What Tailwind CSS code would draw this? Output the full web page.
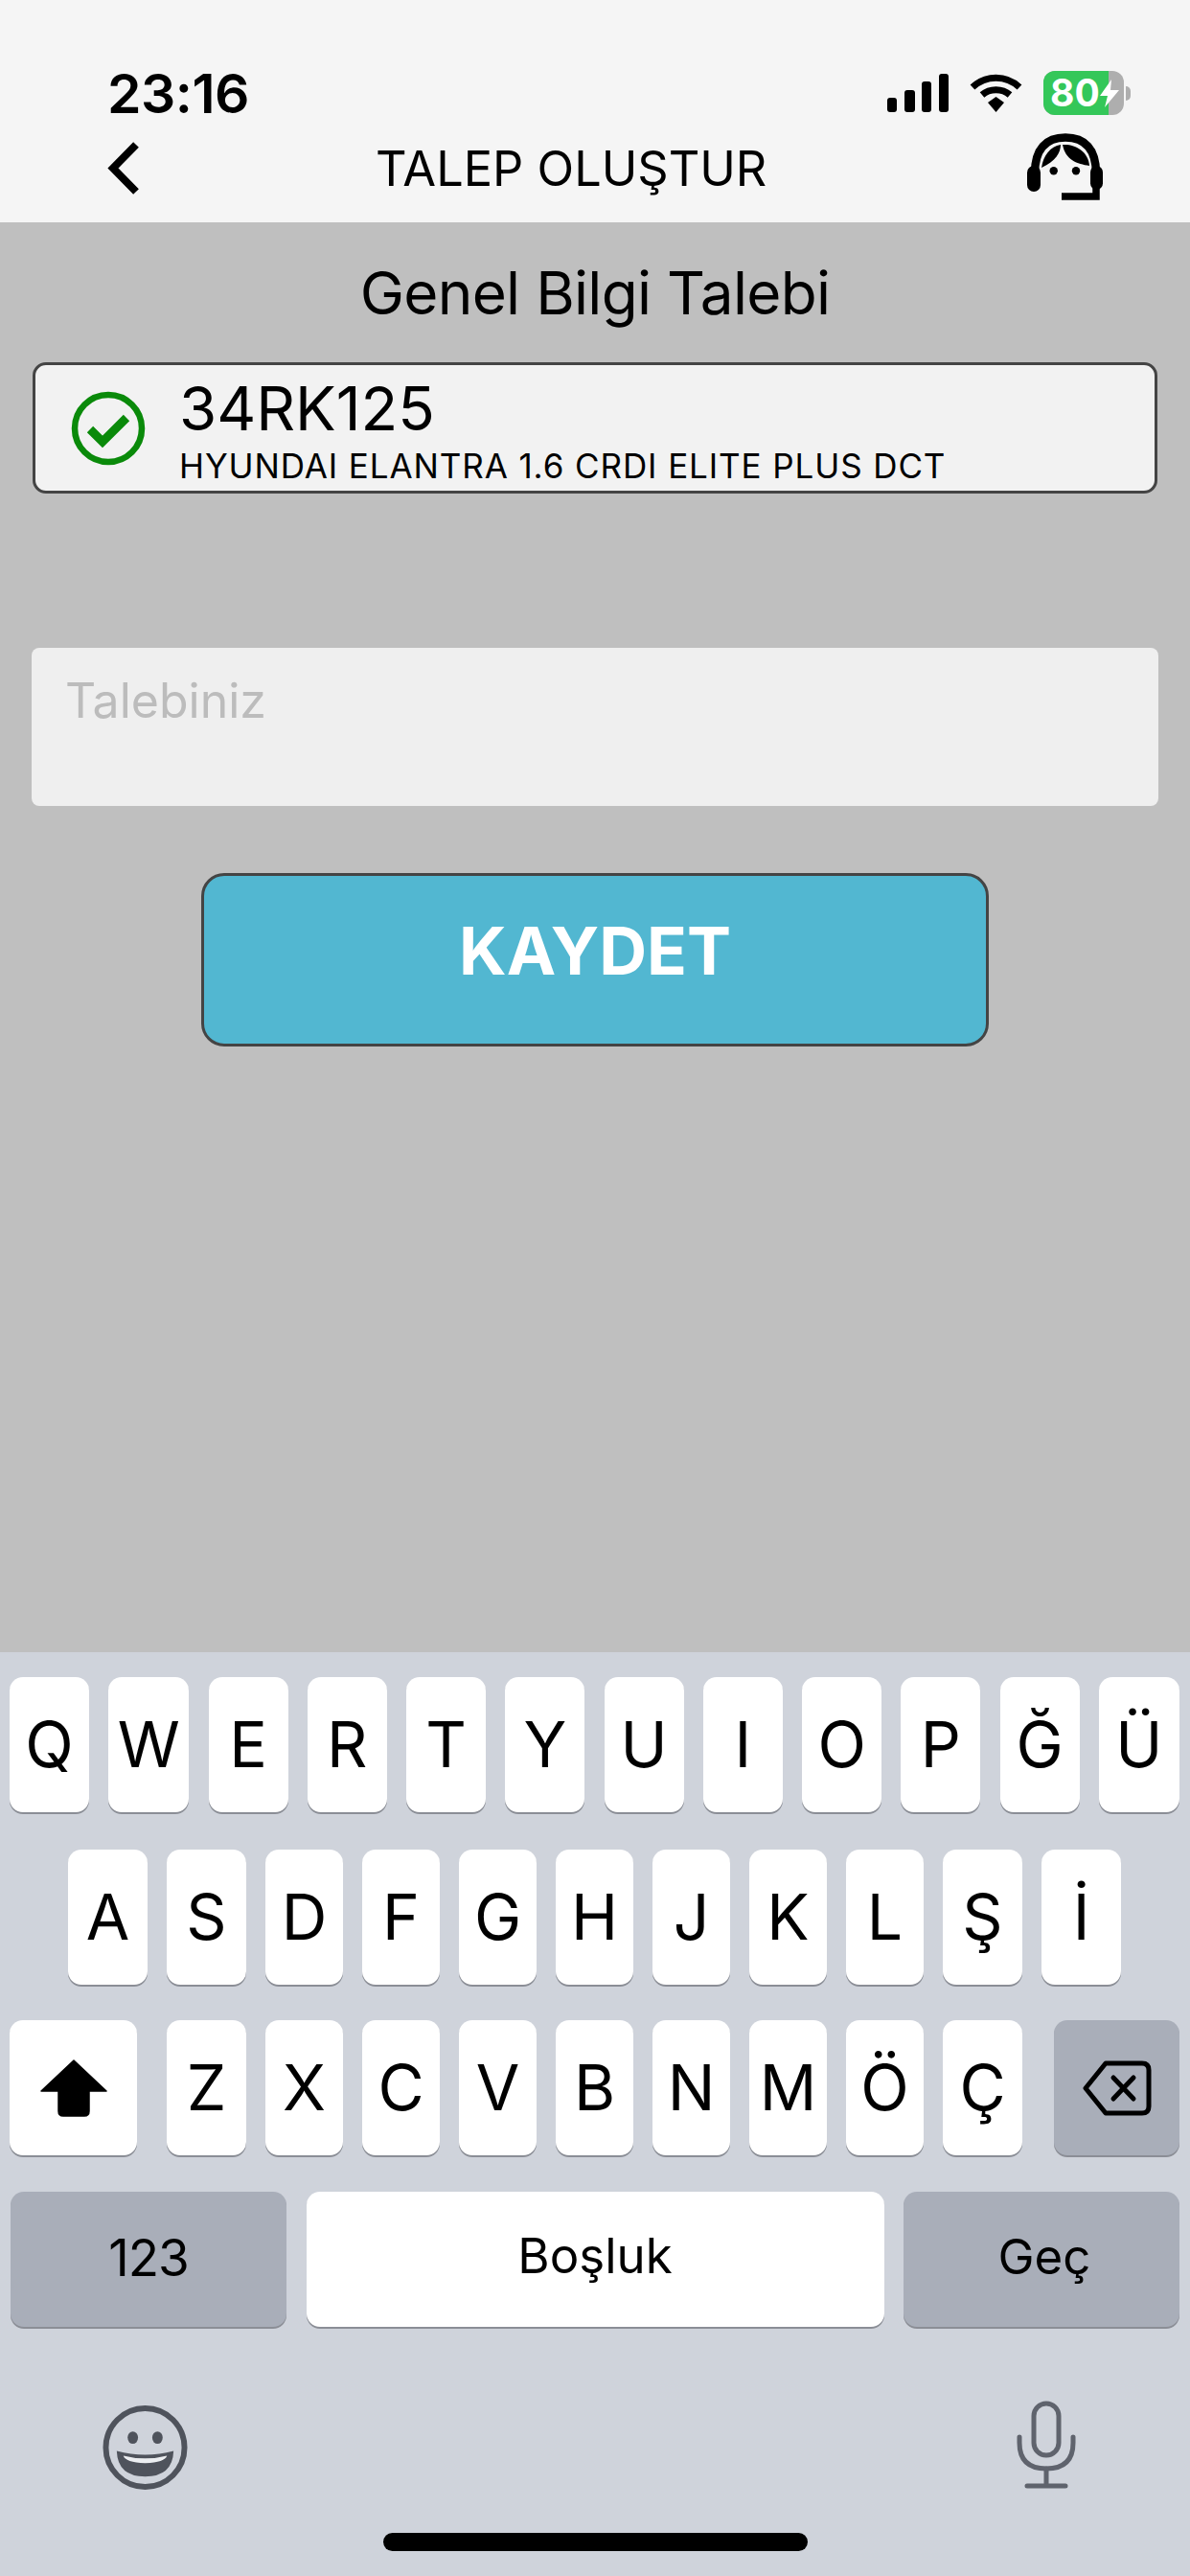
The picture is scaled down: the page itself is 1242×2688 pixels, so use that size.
<!DOCTYPE html>
<html lang="tr">
<head>
<meta charset="utf-8">
<script src="https://cdn.jsdelivr.net/npm/@tailwindcss/browser@4"></script>
</head>
<body class="m-0">
<div class="w-[1242px] h-[2688px] flex flex-col overflow-hidden bg-[#bfbfbf] text-black font-['Inter',sans-serif]">
  <!-- header -->
  <header class="h-[232px] shrink-0 bg-[#f5f5f5] pl-[112px] pr-[62px] flex flex-col">
    <div class="h-[140px] flex items-start justify-between pt-[66px]">
      <span class="text-[57px] font-semibold leading-[64px] tracking-[-0.5px]">23:16</span>
      <div class="flex items-start gap-[22px] pt-[11px]">
        <svg width="64" height="40" viewBox="0 0 64 40" fill="#000"><rect x="0" y="25" width="10" height="15" rx="3"/><rect x="18" y="17" width="11" height="23" rx="3"/><rect x="36" y="8" width="10" height="32" rx="3"/><rect x="54" y="0" width="10" height="40" rx="3"/></svg>
        <svg width="55" height="40" viewBox="0 0 55 40" fill="none" stroke="#000"><path d="M3 14 C17 1 38 1 52 14" stroke-width="7"/><path d="M13 22 C21 15 34 15 42 22" stroke-width="7"/><path d="M19 30 L27.5 24 L36 30 L27.5 40 Z" fill="#000" stroke="none"/></svg>
        <div class="relative flex items-center -mt-[3px]">
          <div class="relative w-[84px] h-[46px] rounded-[12px] overflow-hidden bg-[#aeaeae] flex">
            <div class="w-[68px] bg-[#34c759]"></div>
            <span class="absolute left-[7px] top-0 leading-[46px] text-[39px] font-bold text-white">80</span>
            <svg class="absolute left-[59px] top-[9px]" width="20" height="29" viewBox="0 0 20 29" fill="#fff"><path d="M12 0 L0 17 H8 L5 29 L20 11 H11 Z"/></svg>
          </div>
          <div class="w-[5px] h-[15px] ml-[2px] rounded-r-full bg-[#aeaeae]"></div>
        </div>
      </div>
    </div>
    <div class="flex-1 relative flex items-start justify-between">
      <svg class="mt-[8px]" width="34" height="55" viewBox="0 0 34 55" fill="none" stroke="#000" stroke-width="8"><path d="M30 3 L6 27.5 L30 52"/></svg>
      <span class="absolute left-[280px] top-[8px] text-[50.5px] leading-[56px] whitespace-nowrap">TALEP OLUŞTUR</span>
      <svg class="mr-[28px] -mt-[1px]" width="80" height="72" viewBox="0 0 80 72" fill="none"><path d="M8 42 C8 16 20 4.5 40 4.5 C60 4.5 72 16 72 42" stroke="#000" stroke-width="8.5"/><rect x="0" y="34" width="14" height="27" rx="7" fill="#000"/><rect x="66" y="34" width="13" height="25" rx="6.5" fill="#000"/><path d="M15 36 C17 23 24 14 35 12 C35 20 30 29 15 36 Z" fill="#000"/><path d="M37 12 C50 11 64 19 65 34 C52 32 40 28 37 12 Z" fill="#000"/><circle cx="27.7" cy="39.3" r="4.2" fill="#000"/><circle cx="51" cy="39.3" r="4.2" fill="#000"/><path d="M72 50 V66 H36" stroke="#000" stroke-width="7.5"/></svg>
    </div>
  </header>

  <!-- content -->
  <main class="flex-1 flex flex-col items-stretch px-[33px]">
    <h1 class="text-[62px] leading-[76px] font-normal tracking-[-0.7px] text-center mt-[36px]">Genel Bilgi Talebi</h1>
    <div class="mt-[34px] mx-[1px] h-[137px] rounded-[14px] border-[3px] border-[#444] bg-[#f2f2f2] flex items-center pl-[37px]">
      <svg width="78" height="78" viewBox="0 0 78 78" fill="none" stroke="#0a8a0a"><circle cx="39" cy="39" r="35" stroke-width="6.5"/><path d="M20 40 L33 53 L58 28" stroke-width="9"/></svg>
      <div class="ml-[35px] pt-[6px] flex flex-col">
        <span class="text-[63.5px] leading-[62px]">34RK125</span>
        <span class="mt-[10px] text-[35px] leading-[38px] tracking-[0.9px] whitespace-nowrap">HYUNDAI ELANTRA 1.6 CRDI ELITE PLUS DCT</span>
      </div>
    </div>
    <div class="mt-[161px] h-[165px] rounded-[8px] bg-[#efefef] pl-[35px] pt-[25px] text-[50px] leading-[60px] text-[#bcbcbc]">Talebiniz</div>
    <button class="mt-[70px] self-center w-[822px] h-[181px] rounded-[24px] border-[3px] border-[#444] bg-[#52b7d1] text-white text-[69px] font-bold pb-[18px]">KAYDET</button>
  </main>

  <!-- keyboard -->
  <section class="h-[964px] shrink-0 bg-[#cfd3db] pt-[26px] text-[66px]">
    <div class="flex flex-col gap-[39px]">
      <div class="flex justify-between px-[10px] pr-[11px]">
        <div class="w-[83px] h-[141px] flex items-center justify-center rounded-[14px] bg-white shadow-[0_2px_0_#8b8e96]">Q</div>
        <div class="w-[84px] h-[141px] flex items-center justify-center rounded-[14px] bg-white shadow-[0_2px_0_#8b8e96]">W</div>
        <div class="w-[83px] h-[141px] flex items-center justify-center rounded-[14px] bg-white shadow-[0_2px_0_#8b8e96]">E</div>
        <div class="w-[83px] h-[141px] flex items-center justify-center rounded-[14px] bg-white shadow-[0_2px_0_#8b8e96]">R</div>
        <div class="w-[83px] h-[141px] flex items-center justify-center rounded-[14px] bg-white shadow-[0_2px_0_#8b8e96]">T</div>
        <div class="w-[83px] h-[141px] flex items-center justify-center rounded-[14px] bg-white shadow-[0_2px_0_#8b8e96]">Y</div>
        <div class="w-[83px] h-[141px] flex items-center justify-center rounded-[14px] bg-white shadow-[0_2px_0_#8b8e96]">U</div>
        <div class="w-[83px] h-[141px] flex items-center justify-center rounded-[14px] bg-white shadow-[0_2px_0_#8b8e96]">I</div>
        <div class="w-[83px] h-[141px] flex items-center justify-center rounded-[14px] bg-white shadow-[0_2px_0_#8b8e96]">O</div>
        <div class="w-[83px] h-[141px] flex items-center justify-center rounded-[14px] bg-white shadow-[0_2px_0_#8b8e96]">P</div>
        <div class="w-[83px] h-[141px] flex items-center justify-center rounded-[14px] bg-white shadow-[0_2px_0_#8b8e96]">Ğ</div>
        <div class="w-[84px] h-[141px] flex items-center justify-center rounded-[14px] bg-white shadow-[0_2px_0_#8b8e96]">Ü</div>
      </div>
      <div class="flex justify-between pl-[71px] pr-[72px]">
        <div class="w-[83px] h-[141px] flex items-center justify-center rounded-[14px] bg-white shadow-[0_2px_0_#8b8e96]">A</div>
        <div class="w-[83px] h-[141px] flex items-center justify-center rounded-[14px] bg-white shadow-[0_2px_0_#8b8e96]">S</div>
        <div class="w-[81px] h-[141px] flex items-center justify-center rounded-[14px] bg-white shadow-[0_2px_0_#8b8e96]">D</div>
        <div class="w-[81px] h-[141px] flex items-center justify-center rounded-[14px] bg-white shadow-[0_2px_0_#8b8e96]">F</div>
        <div class="w-[81px] h-[141px] flex items-center justify-center rounded-[14px] bg-white shadow-[0_2px_0_#8b8e96]">G</div>
        <div class="w-[81px] h-[141px] flex items-center justify-center rounded-[14px] bg-white shadow-[0_2px_0_#8b8e96]">H</div>
        <div class="w-[81px] h-[141px] flex items-center justify-center rounded-[14px] bg-white shadow-[0_2px_0_#8b8e96]">J</div>
        <div class="w-[81px] h-[141px] flex items-center justify-center rounded-[14px] bg-white shadow-[0_2px_0_#8b8e96]">K</div>
        <div class="w-[81px] h-[141px] flex items-center justify-center rounded-[14px] bg-white shadow-[0_2px_0_#8b8e96]">L</div>
        <div class="w-[83px] h-[141px] flex items-center justify-center rounded-[14px] bg-white shadow-[0_2px_0_#8b8e96]">Ş</div>
        <div class="w-[83px] h-[141px] flex items-center justify-center rounded-[14px] bg-white shadow-[0_2px_0_#8b8e96]">İ</div>
      </div>
      <div class="flex gap-[20px] pl-[10px] -mt-[2px]">
        <div class="w-[133px] h-[141px] flex items-center justify-center rounded-[14px] bg-white shadow-[0_2px_0_#8b8e96]">
          <svg width="70" height="60" viewBox="0 0 70 60" fill="#000"><path d="M35 1 L69 33 H51 V54 Q51 59 46 59 H24 Q19 59 19 54 V33 H1 Z" stroke="#000" stroke-width="1.5" stroke-linejoin="round"/></svg>
        </div>
        <div class="ml-[11px] w-[83px] h-[141px] flex items-center justify-center rounded-[14px] bg-white shadow-[0_2px_0_#8b8e96]">Z</div>
        <div class="w-[81px] h-[141px] flex items-center justify-center rounded-[14px] bg-white shadow-[0_2px_0_#8b8e96]">X</div>
        <div class="w-[81px] h-[141px] flex items-center justify-center rounded-[14px] bg-white shadow-[0_2px_0_#8b8e96]">C</div>
        <div class="w-[81px] h-[141px] flex items-center justify-center rounded-[14px] bg-white shadow-[0_2px_0_#8b8e96]">V</div>
        <div class="w-[81px] h-[141px] flex items-center justify-center rounded-[14px] bg-white shadow-[0_2px_0_#8b8e96]">B</div>
        <div class="w-[81px] h-[141px] flex items-center justify-center rounded-[14px] bg-white shadow-[0_2px_0_#8b8e96]">N</div>
        <div class="w-[81px] h-[141px] flex items-center justify-center rounded-[14px] bg-white shadow-[0_2px_0_#8b8e96]">M</div>
        <div class="w-[81px] h-[141px] flex items-center justify-center rounded-[14px] bg-white shadow-[0_2px_0_#8b8e96]">Ö</div>
        <div class="w-[83px] h-[141px] flex items-center justify-center rounded-[14px] bg-white shadow-[0_2px_0_#8b8e96]">Ç</div>
        <div class="ml-[13px] w-[131px] h-[141px] flex items-center justify-center rounded-[14px] bg-[#a9aeb9] shadow-[0_2px_0_#8b8e96]">
          <svg width="72" height="58" viewBox="0 0 72 58" fill="none" stroke="#000" stroke-width="5" stroke-linejoin="round"><path d="M24 3 H62 Q69 3 69 10 V48 Q69 55 62 55 H24 L3 29 Z"/><path d="M32 18 L53 40 M53 18 L32 40" stroke-linecap="round"/></svg>
        </div>
      </div>
      <div class="flex justify-between px-[11px] text-[51px] -mt-[1px]">
        <div class="w-[288px] h-[141px] flex items-center justify-center rounded-[14px] bg-[#a9aeb9] shadow-[0_2px_0_#8b8e96] text-[53px] tracking-[-1px] pb-[1px]">123</div>
        <div class="w-[603px] h-[141px] flex items-center justify-center rounded-[14px] bg-white shadow-[0_2px_0_#8b8e96] pb-[6px]">Boşluk</div>
        <div class="w-[288px] h-[141px] flex items-center justify-center rounded-[14px] bg-[#a9aeb9] shadow-[0_2px_0_#8b8e96] pb-[5px] pl-[6px]">Geç</div>
      </div>
    </div>
    <div class="flex justify-between items-start pl-[107px] pr-[119px] mt-[82px]">
      <svg width="89" height="88" viewBox="0 0 90 89" fill="none"><circle cx="45" cy="44.5" r="41.5" stroke="#4f535c" stroke-width="6"/><ellipse cx="32" cy="34" rx="5.5" ry="6.5" fill="#4f535c"/><ellipse cx="58" cy="34" rx="5.5" ry="6.5" fill="#4f535c"/><path d="M15 48 Q45 56 75 48 Q74 75 45 75 Q16 75 15 48 Z" fill="#4f535c"/><path d="M22 53 Q45 59 68 53 Q66 60 45 61 Q24 60 22 53 Z" fill="#eceef1"/></svg>
      <svg class="-mt-[5px]" width="62" height="92" viewBox="0 0 62 92" fill="none" stroke="#5f636d" stroke-width="5" stroke-linecap="round"><rect x="18" y="3" width="26" height="54" rx="13"/><path d="M3 38 V44 Q3 71 31 71 Q59 71 59 44 V38"/><path d="M31 71 V88 M11 89 H51"/></svg>
    </div>
    <div class="mt-[45px] ml-[400px] w-[443px] h-[19px] rounded-full bg-black"></div>
  </section>
</div>
</body>
</html>
